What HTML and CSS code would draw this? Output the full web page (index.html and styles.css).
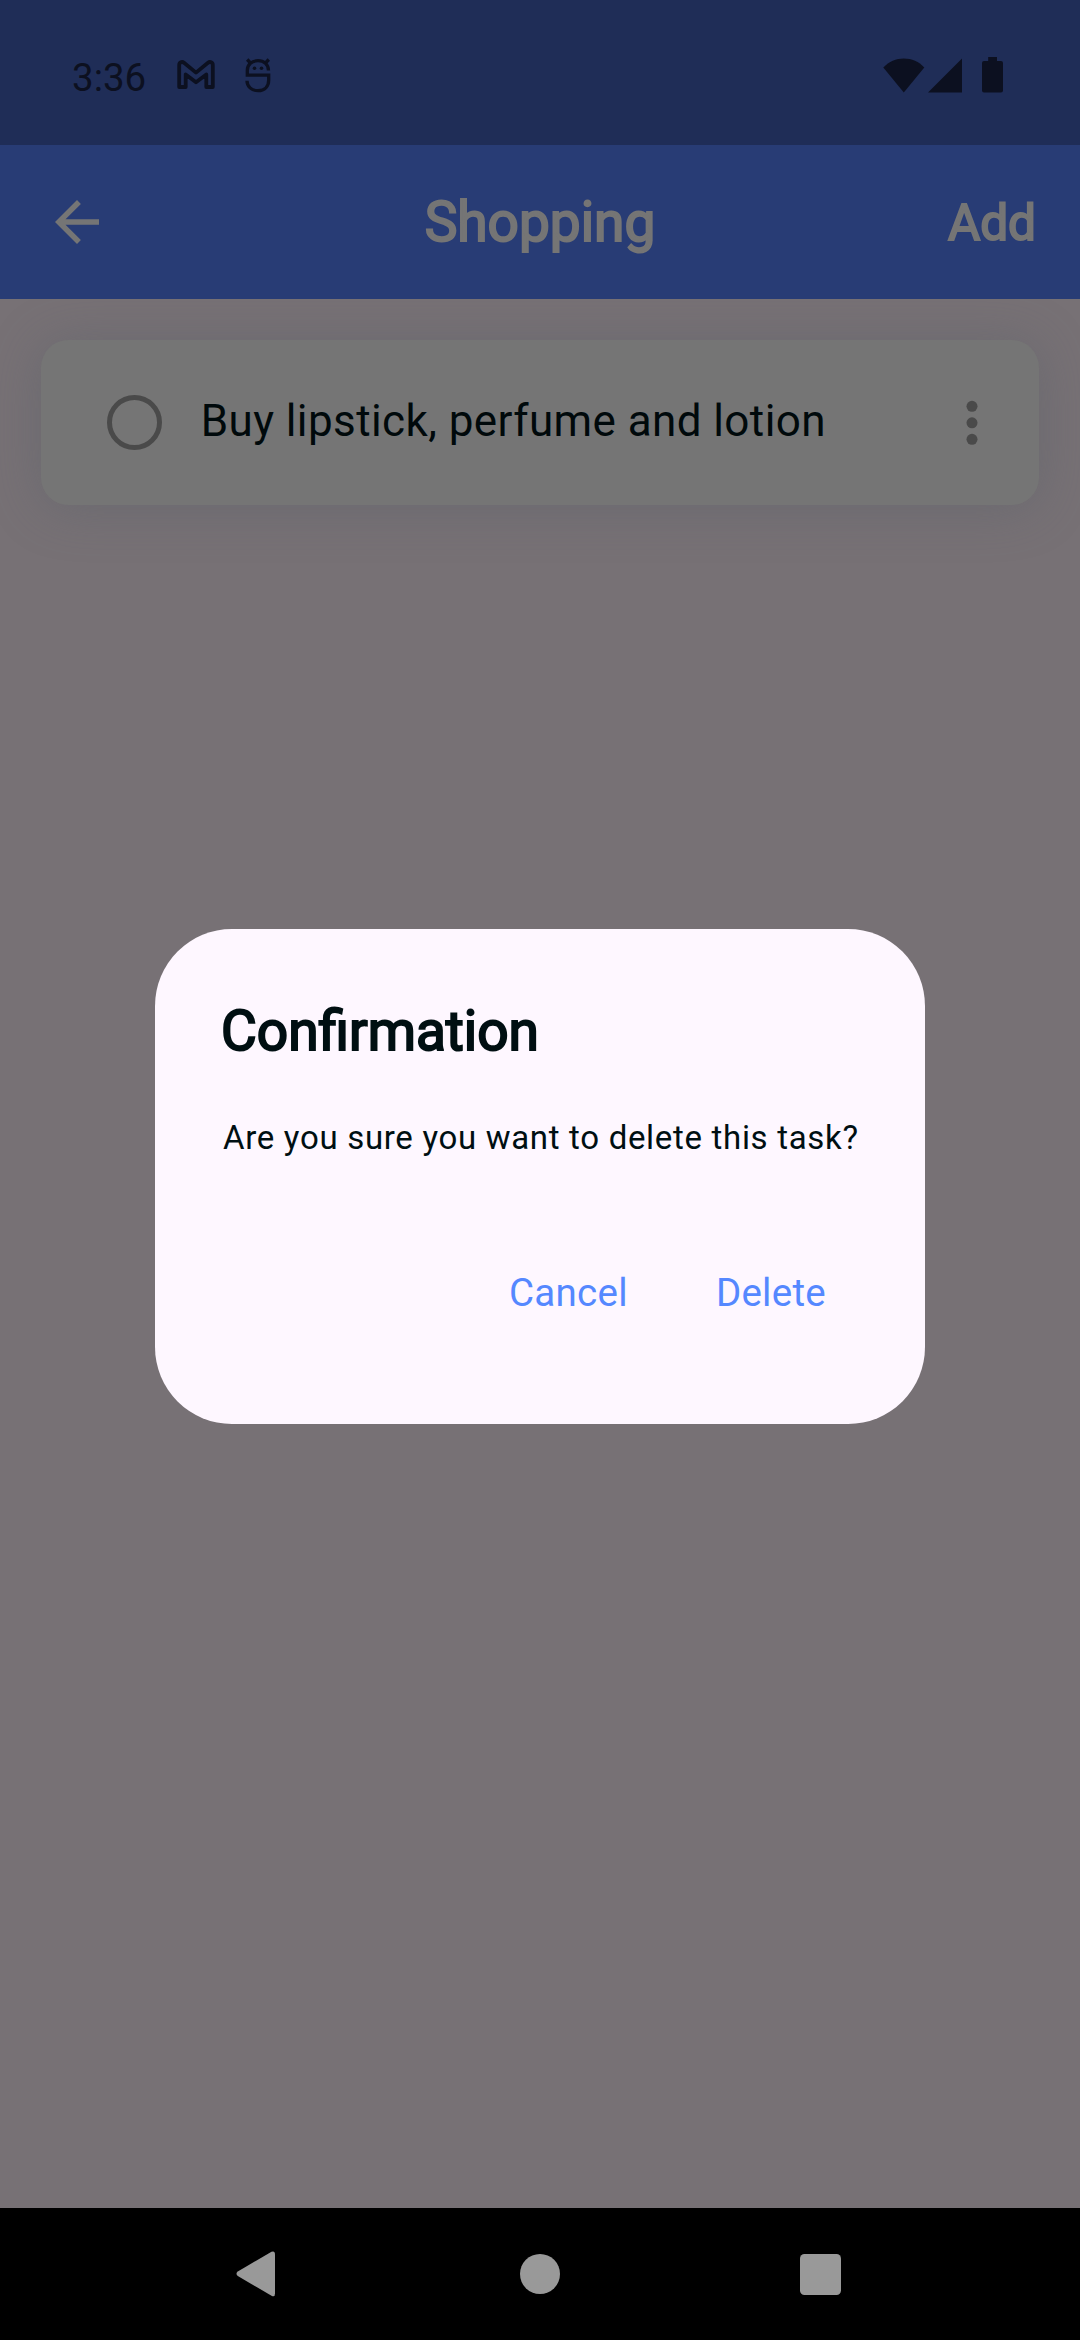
FILE: index.html
```html
<!DOCTYPE html>
<html lang="en">
<head>
<meta charset="utf-8">
<title>Shopping</title>
<link rel="stylesheet" href="styles.css">
</head>
<body>
<div class="screen">
  <div class="status-bar">
    <div class="status-left">
      <span class="clock">3:36</span>
      <svg class="icon-mail" width="38" height="30" viewBox="0 0 38 30" fill="none" stroke="currentColor" stroke-width="3.8" stroke-linejoin="round"><path d="M2.200 27V5.200C2.200 2.200 5 1.200 7 2.800L19 12.600L31 2.800C33 1.200 35.800 2.200 35.800 5.200V27H29.300V14.500L19 22.300L8.700 14.500V27Z"/></svg>
      <svg class="icon-face" width="26" height="36" viewBox="0 0 26 36" fill="none" stroke="currentColor" stroke-width="3.3"><path d="M23.500 12.500C23.500 6.500 19 2.700 13 2.700S2.300 6.500 2.300 12.500V17.200H23.700V22C23.700 28.500 19.500 32.700 13 32.700S2 28.500 2 22.800"/><path d="M2.200 1.500L5.500 5M23.800 1.500L20.500 5"/><circle cx="9.500" cy="10.300" r="1.800" fill="currentColor" stroke="none"/><circle cx="16.500" cy="10.300" r="1.800" fill="currentColor" stroke="none"/></svg>
    </div>
    <div class="status-right">
      <svg class="icon-wifi" width="42" height="35" viewBox="0 0 42 35" fill="currentColor"><path d="M0.300 9.500C6 3.500 13 .5 20.800 .5S36 3.500 41.300 9.500L20.800 34.500Z"/></svg>
      <svg class="icon-signal" width="34" height="35" viewBox="0 0 34 35" fill="currentColor"><path d="M34 .5V34.500H0Z"/></svg>
      <svg class="icon-battery" width="21" height="36" viewBox="0 0 21 36" fill="currentColor"><path d="M6.200 0H15V4H19Q21 4 21 6V33.500Q21 35.500 19 35.500H2Q0 35.500 0 33.500V6Q0 4 2 4H6.200Z"/></svg>
    </div>
  </div>
  <div class="app-bar">
    <svg class="back" width="66" height="66" viewBox="0 0 24 24" fill="currentColor"><path d="M20 11H7.830l5.590-5.590L12 4l-8 8 8 8 1.410-1.410L7.830 13H20v-2z"/></svg>
    <h1 class="title">Shopping</h1>
    <span class="add">Add</span>
  </div>
  <main class="content">
    <div class="task">
      <span class="radio"></span>
      <span class="task-text">Buy lipstick, perfume and lotion</span>
      <svg class="more" width="12" height="45" viewBox="0 0 12 45" fill="currentColor"><circle cx="6" cy="6.300" r="5.500"/><circle cx="6" cy="22.800" r="5.500"/><circle cx="6" cy="39.300" r="5.500"/></svg>
    </div>
  </main>
  <div class="nav-bar">
    <svg width="40" height="46" viewBox="0 0 40 46" fill="currentColor"><path d="M35.500 .8Q39 -.5 39 3.500V42.500Q39 46.500 35.500 44.700L1.800 25Q-.8 22.700 1.800 20.500Z"/></svg>
    <svg width="40" height="40" viewBox="0 0 40 40" fill="currentColor"><circle cx="20" cy="20" r="20"/></svg>
    <svg width="41" height="41" viewBox="0 0 41 41" fill="currentColor"><rect width="41" height="41" rx="4.500"/></svg>
  </div>
  <div class="dialog" role="dialog">
    <h2 class="dialog-title">Confirmation</h2>
    <p class="dialog-text">Are you sure you want to delete this task?</p>
    <div class="actions">
      <span>Cancel</span>
      <span>Delete</span>
    </div>
  </div>
</div>
</body>
</html>
```
FILE: styles.css
```css
* { box-sizing: border-box; margin: 0; padding: 0; }

body { font-family: Roboto, "Liberation Sans", sans-serif; font-weight: 400; }

svg { display: block; flex: none; }

.screen {
  position: relative;
  display: flex;
  flex-direction: column;
  width: 1080px;
  height: 2340px;
  overflow: hidden;
  background: #777175;
  white-space: nowrap;
}

.status-bar {
  display: flex;
  justify-content: space-between;
  height: 145px;
  padding: 57px 77px 0 72px;
  background: #1f2d57;
  color: #0c1020;
}

.status-left, .status-right { display: flex; align-items: flex-start; }
.clock { width: 105px; font-size: 38.5px; line-height: 42px; }
.icon-mail { margin-top: 3px; }
.icon-face { margin: 1px 0 0 30px; }
.icon-wifi, .icon-signal { margin-top: 1px; }
.icon-signal { margin: 1px 20px 0 3px; }

.app-bar {
  position: relative;
  display: grid;
  grid-template-columns: 1fr auto 1fr;
  align-items: center;
  height: 154px;
  padding: 0 44px;
  background: #283c75;
  color: #757575;
  -webkit-text-stroke: 2px #757575;
  z-index: 1;
}

.back { -webkit-text-stroke: 0; }
.title { font-size: 55px; font-weight: 400; line-height: 64px; }
.add { padding-top: 2px; font-size: 49.5px; line-height: 58px; text-align: right; }

.content { flex: 1; padding: 41px; }

.task {
  display: flex;
  align-items: center;
  height: 165px;
  padding: 0 61px 0 66px;
  border-radius: 27.5px;
  background: #757575;
  box-shadow: 0 3px 50px rgba(90, 95, 105, 0.46);
  color: #4a4a4a;
}

.radio { width: 55px; height: 55px; border: 5.5px solid #4a4a4a; border-radius: 50%; }

.task-text {
  flex: 1;
  padding: 0 0 3px 38.7px;
  font-size: 44px;
  line-height: 52px;
  letter-spacing: 0.4125px;
  color: #00090b;
}

.nav-bar {
  display: flex;
  justify-content: space-between;
  align-items: center;
  height: 132px;
  padding: 0 239px 0 236px;
  background: #000;
  color: #999;
}

.nav-bar :nth-child(2) { margin-left: 4px; }

.dialog {
  position: absolute;
  top: 929px;
  left: 155px;
  width: 770px;
  height: 495px;
  padding: 66px;
  border-radius: 77px;
  background: #fef7ff;
  color: #000f12;
}

.dialog-title {
  font-size: 55px;
  font-weight: 400;
  line-height: 72px;
  -webkit-text-stroke: 2px #000f12;
}

.dialog-text {
  padding: 51px 0 0 2px;
  font-size: 33px;
  line-height: 40px;
  letter-spacing: 0.6875px;
}

.actions {
  display: flex;
  justify-content: flex-end;
  gap: 88px;
  padding: 112px 33px 0 0;
  font-size: 38.5px;
  line-height: 46px;
  letter-spacing: 0.275px;
  color: #5588ff;
}
```
